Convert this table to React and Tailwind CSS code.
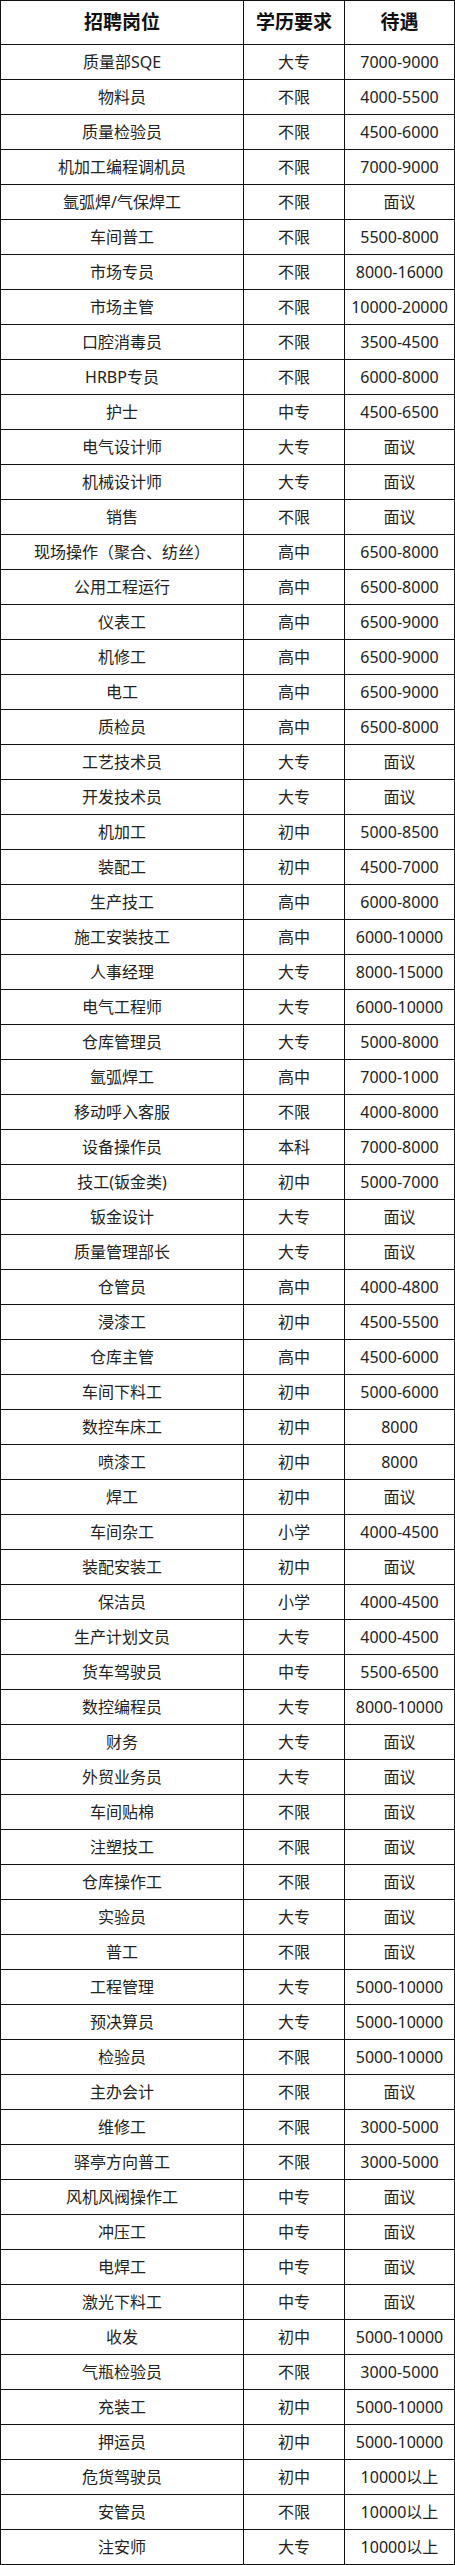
import React from 'react';

const rows = [
  ['质量部SQE', '大专', '7000-9000'],
  ['物料员', '不限', '4000-5500'],
  ['质量检验员', '不限', '4500-6000'],
  ['机加工编程调机员', '不限', '7000-9000'],
  ['氩弧焊/气保焊工', '不限', '面议'],
  ['车间普工', '不限', '5500-8000'],
  ['市场专员', '不限', '8000-16000'],
  ['市场主管', '不限', '10000-20000'],
  ['口腔消毒员', '不限', '3500-4500'],
  ['HRBP专员', '不限', '6000-8000'],
  ['护士', '中专', '4500-6500'],
  ['电气设计师', '大专', '面议'],
  ['机械设计师', '大专', '面议'],
  ['销售', '不限', '面议'],
  ['现场操作（聚合、纺丝）', '高中', '6500-8000'],
  ['公用工程运行', '高中', '6500-8000'],
  ['仪表工', '高中', '6500-9000'],
  ['机修工', '高中', '6500-9000'],
  ['电工', '高中', '6500-9000'],
  ['质检员', '高中', '6500-8000'],
  ['工艺技术员', '大专', '面议'],
  ['开发技术员', '大专', '面议'],
  ['机加工', '初中', '5000-8500'],
  ['装配工', '初中', '4500-7000'],
  ['生产技工', '高中', '6000-8000'],
  ['施工安装技工', '高中', '6000-10000'],
  ['人事经理', '大专', '8000-15000'],
  ['电气工程师', '大专', '6000-10000'],
  ['仓库管理员', '大专', '5000-8000'],
  ['氩弧焊工', '高中', '7000-1000'],
  ['移动呼入客服', '不限', '4000-8000'],
  ['设备操作员', '本科', '7000-8000'],
  ['技工(钣金类)', '初中', '5000-7000'],
  ['钣金设计', '大专', '面议'],
  ['质量管理部长', '大专', '面议'],
  ['仓管员', '高中', '4000-4800'],
  ['浸漆工', '初中', '4500-5500'],
  ['仓库主管', '高中', '4500-6000'],
  ['车间下料工', '初中', '5000-6000'],
  ['数控车床工', '初中', '8000'],
  ['喷漆工', '初中', '8000'],
  ['焊工', '初中', '面议'],
  ['车间杂工', '小学', '4000-4500'],
  ['装配安装工', '初中', '面议'],
  ['保洁员', '小学', '4000-4500'],
  ['生产计划文员', '大专', '4000-4500'],
  ['货车驾驶员', '中专', '5500-6500'],
  ['数控编程员', '大专', '8000-10000'],
  ['财务', '大专', '面议'],
  ['外贸业务员', '大专', '面议'],
  ['车间贴棉', '不限', '面议'],
  ['注塑技工', '不限', '面议'],
  ['仓库操作工', '不限', '面议'],
  ['实验员', '大专', '面议'],
  ['普工', '不限', '面议'],
  ['工程管理', '大专', '5000-10000'],
  ['预决算员', '大专', '5000-10000'],
  ['检验员', '不限', '5000-10000'],
  ['主办会计', '不限', '面议'],
  ['维修工', '不限', '3000-5000'],
  ['驿亭方向普工', '不限', '3000-5000'],
  ['风机风阀操作工', '中专', '面议'],
  ['冲压工', '中专', '面议'],
  ['电焊工', '中专', '面议'],
  ['激光下料工', '中专', '面议'],
  ['收发', '初中', '5000-10000'],
  ['气瓶检验员', '不限', '3000-5000'],
  ['充装工', '初中', '5000-10000'],
  ['押运员', '初中', '5000-10000'],
  ['危货驾驶员', '初中', '10000以上'],
  ['安管员', '不限', '10000以上'],
  ['注安师', '大专', '10000以上'],
];

const font = { fontFamily: '"Noto Sans", "Noto Sans CJK SC", sans-serif' };

function Cell({ children, head }) {
  return (
    <div
      className={`flex items-center justify-center border-r border-b border-[#111] ${
        head ? 'h-[44px] text-[19px] font-bold text-[#111]' : 'h-[35px] text-[16px] text-[#222]'
      }`}
    >
      {children}
    </div>
  );
}

export default function App() {
  return (
    <div className="w-[455px] bg-white" style={font}>
      <div className="grid grid-cols-[243px_101px_110px] border-t border-l border-[#111]">
        <Cell head>招聘岗位</Cell>
        <Cell head>学历要求</Cell>
        <Cell head>待遇</Cell>
        {rows.map((r, i) => (
          <React.Fragment key={i}>
            <Cell>{r[0]}</Cell>
            <Cell>{r[1]}</Cell>
            <Cell>{r[2]}</Cell>
          </React.Fragment>
        ))}
      </div>
    </div>
  );
}
